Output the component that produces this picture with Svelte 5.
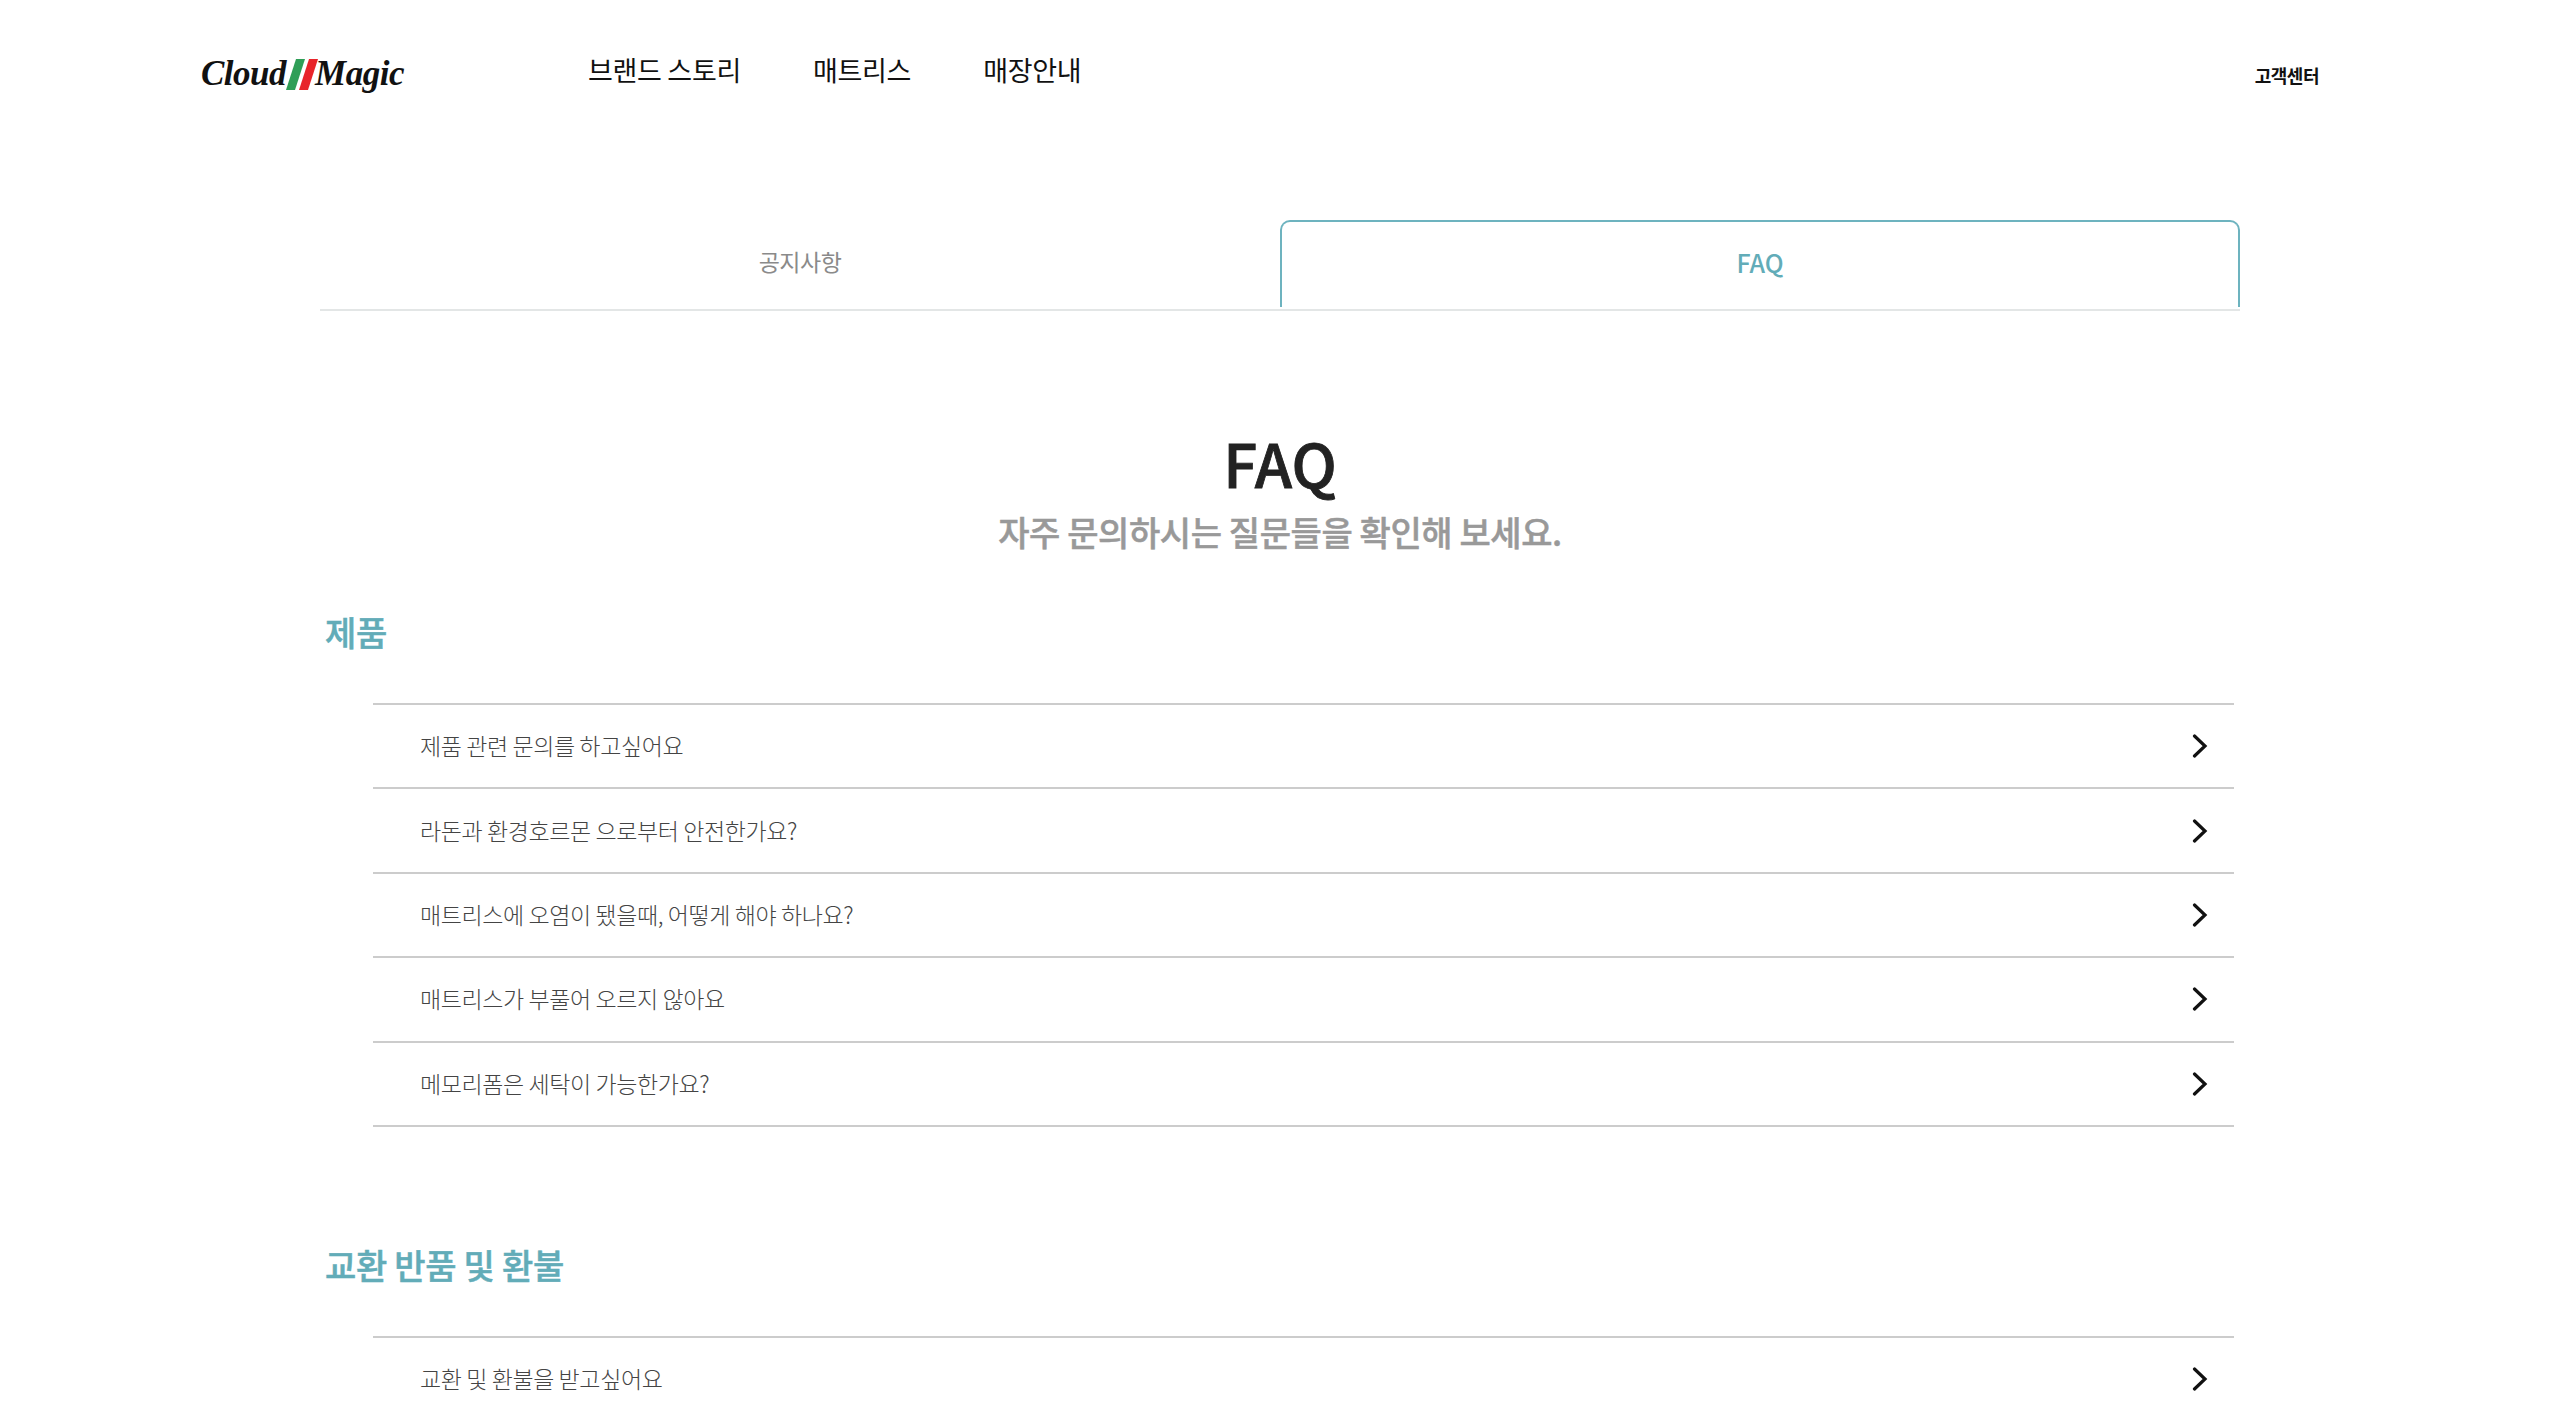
<script>
  const sections = [
    { title: '제품', items: ['제품 관련 문의를 하고싶어요', '라돈과 환경호르몬 으로부터 안전한가요?', '매트리스에 오염이 됐을때, 어떻게 해야 하나요?', '매트리스가 부풀어 오르지 않아요', '메모리폼은 세탁이 가능한가요?'] },
    { title: '교환 반품 및 환불', items: ['교환 및 환불을 받고싶어요'] }
  ];
</script>

<div class="page">
  <header class="header">
    <a class="logo" href="#top">
      <span class="script">Cloud</span>
      <svg class="stripes" viewBox="0 0 32 31" width="32" height="31" aria-hidden="true">
        <polygon points="10,0 19,0 9,31 0,31" fill="#2f9e57" />
        <polygon points="23,0 32,0 22,31 13,31" fill="#e8242a" />
      </svg>
      <span class="script magic">Magic</span>
    </a>
    <nav class="nav">
      <a href="#top">브랜드 스토리</a>
      <a href="#top">매트리스</a>
      <a href="#top">매장안내</a>
    </nav>
    <a class="support" href="#top">고객센터</a>
  </header>

  <main class="main">
    <div class="tabs">
      <button class="tab">공지사항</button>
      <button class="tab active">FAQ</button>
    </div>

    <div class="heading">
      <h1>FAQ</h1>
      <p>자주 문의하시는 질문들을 확인해 보세요.</p>
    </div>

    {#each sections as section}
      <section class="section">
        <h2>{section.title}</h2>
        <ul>
          {#each section.items as item}
            <li>
              <span class="question">{item}</span>
              <svg viewBox="0 0 16 24" width="16" height="24" aria-hidden="true">
                <path d="M2.5 2 L13 12 L2.5 22" fill="none" stroke="#111" stroke-width="3.2" stroke-linecap="round" stroke-linejoin="miter" />
              </svg>
            </li>
          {/each}
        </ul>
      </section>
    {/each}
  </main>
</div>

<style>
  :global(body) {
    margin: 0;
    background: #fff;
    overflow: hidden;
  }
  .page {
    height: 1413px;
    overflow: hidden;
    font-family: "Noto Sans CJK KR", "Noto Sans", sans-serif;
    color: #222;
  }
  a { color: inherit; text-decoration: none; }
  .header {
    display: flex;
    align-items: flex-start;
    height: 220px;
    box-sizing: border-box;
    padding: 0 241px 0 201px;
  }
  .logo {
    display: flex;
    align-items: center;
    width: 387px;
    height: 36px;
    margin-top: 56px;
    color: #111;
  }
  .script {
    font-family: "Liberation Serif", serif;
    font-style: italic;
    font-weight: 700;
    font-size: 35px;
    letter-spacing: -0.5px;
    line-height: 36px;
  }
  .magic { margin-left: -3px; }
  .stripes { flex: none; }
  .nav {
    display: flex;
    gap: 72px;
    margin-top: 50px;
    font-size: 27px;
    line-height: 40px;
    letter-spacing: -0.3px;
    color: #111;
  }
  .support {
    margin-left: auto;
    margin-top: 63px;
    font-size: 18px;
    line-height: 24px;
    font-weight: 700;
    letter-spacing: -0.5px;
    color: #111;
  }
  .main {
    width: 1920px;
    margin: 0 auto;
  }
  .tabs {
    display: grid;
    grid-template-columns: 1fr 1fr;
    height: 89px;
    border-bottom: 2px solid #e3e6e6;
  }
  .tab {
    font: inherit;
    font-size: 23px;
    letter-spacing: -0.5px;
    color: #8a8a8a;
    background: none;
    border: 0;
    padding: 0 0 6px;
    height: 87px;
  }
  .tab.active {
    color: #62acb8;
    font-size: 25px;
    font-weight: 500;
    letter-spacing: 0;
    padding: 0 0 6px;
    border: 2px solid #6db3bf;
    border-bottom: 0;
    border-radius: 10px 10px 0 0;
    box-sizing: border-box;
  }
  .heading {
    margin-top: 115px;
    text-align: center;
  }
  h1 {
    margin: 0;
    font-size: 60px;
    line-height: 72px;
    font-weight: 500;
    -webkit-text-stroke: 0.8px #222;
    letter-spacing: 0;
    color: #222;
  }
  .heading p {
    margin: 9px 0 0;
    font-size: 34px;
    line-height: 50px;
    font-weight: 500;
    -webkit-text-stroke: 0.5px #999;
    letter-spacing: -0.4px;
    color: #999;
  }
  .section h2 {
    margin: 0 0 0 5px;
    font-size: 34px;
    line-height: 50px;
    font-weight: 500;
    -webkit-text-stroke: 0.5px #62acb8;
    letter-spacing: -0.3px;
    color: #62acb8;
  }
  .section { margin-top: 50px; }
  .section + .section { margin-top: 113px; }
  ul {
    list-style: none;
    margin: 46px 6px 0 53px;
    padding: 0;
    border-top: 2px solid #ccc;
  }
  li {
    display: flex;
    align-items: center;
    justify-content: space-between;
    height: 84.4px;
    box-sizing: border-box;
    border-bottom: 2px solid #ccc;
    padding: 0 26px 0 47px;
    font-size: 23px;
    font-weight: 300;
    letter-spacing: -0.4px;
    color: #444;
  }
  .question { padding-bottom: 2px; }
</style>
